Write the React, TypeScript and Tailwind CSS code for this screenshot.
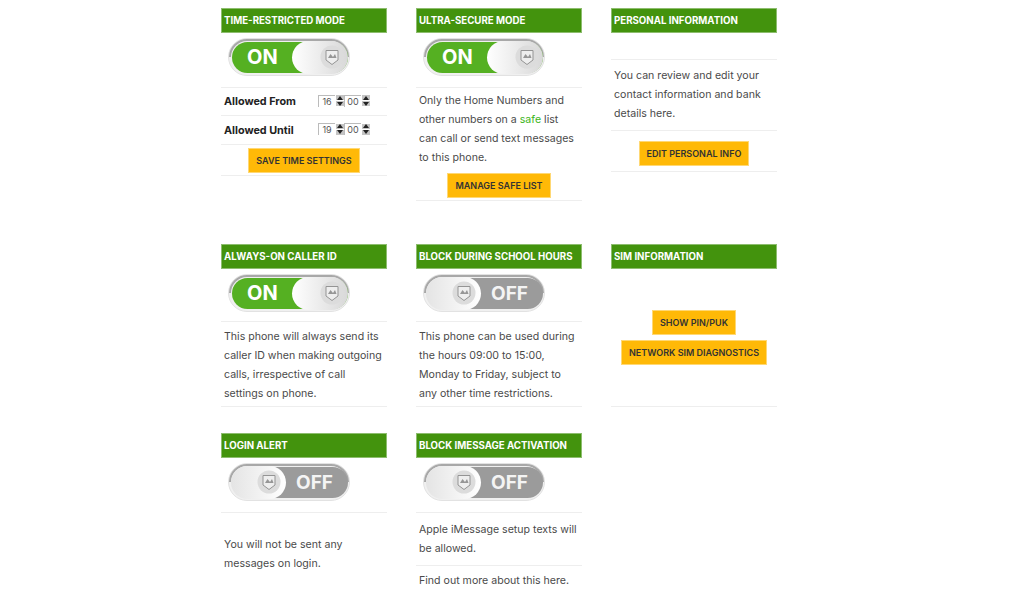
import React from 'react';

const Toggle = ({ on }: { on: boolean }) => (
  <svg width="122" height="38" viewBox="0 0 122 38" className="block">
    <defs>
      <linearGradient id={on ? 'knobOn' : 'knobOff'} x1="0" x2="1" y1="0" y2="0">
        <stop offset="0" stopColor={on ? '#ffffff' : '#e4e4e4'} />
        <stop offset="1" stopColor={on ? '#d8d8d8' : '#ffffff'} />
      </linearGradient>
    </defs>
    <rect x="0.5" y="0.5" width="121" height="37" rx="18.5" fill="#f0f0f0" stroke="#e2e2e2" />
    <path d="M2 19A17 17 0 0 1 19 2H103A17 17 0 0 1 120 19" fill="none" stroke="#a8a8a8" strokeWidth="2" />
    <rect x="4" y="4" width="116" height="31" rx="15.5" fill={on ? '#55b022' : '#9b9b9b'} />
    {on ? (
      <>
        <text x="19" y="26" fontFamily="Inter, sans-serif" fontSize="20" fontWeight="700" fill="#fff">ON</text>
        <rect x="64" y="3" width="56" height="33" rx="16.5" fill="url(#knobOn)" />
      </>
    ) : (
      <>
        <text x="68" y="26" fontFamily="Inter, sans-serif" fontSize="19" fontWeight="700" fill="#f4f4f4">OFF</text>
        <rect x="3" y="3" width="55" height="33" rx="16.5" fill="url(#knobOff)" />
      </>
    )}
    <g transform={on ? 'translate(104 19)' : 'translate(41 19)'}>
      <circle r="11.5" fill="#dcdcdc" />
      <path d="M-6 -6.5L6 -6.5L6 3L0 7.5L-6 3Z" fill="#eeeeee" stroke="#949494" strokeWidth="1" />
      <path d="M-4 1L-1.5 -3L1 0L3 -3L4.5 1Z" fill="#969696" />
    </g>
  </svg>
);

const Header = ({ title }: { title: string }) => (
  <div className="h-[25px] bg-[#43930d] border border-[#8dbd6e] pl-[2px] pt-[1px] flex items-center text-[9.7px] font-bold uppercase whitespace-nowrap text-white">
    {title}
  </div>
);

const Btn = ({ label }: { label: string }) => (
  <div className="h-[25px] px-[7px] bg-[#ffb907] border border-[#ffd874] flex items-center text-[9px] font-semibold uppercase whitespace-nowrap text-[#333]">
    {label}
  </div>
);

const Spinner = ({ value }: { value: string }) => (
  <div className="flex items-center gap-[1px]">
    <div className="w-[17px] h-[12px] text-[9px] leading-[12px] text-center text-[#555] border-l border-t border-[#bbbbbb]">{value}</div>
    <div className="flex flex-col gap-[1px] w-[8px]">
      <div className="h-[5px] bg-[#c4c4c4] flex items-center justify-center">
        <div className="w-0 h-0 border-x-[3px] border-x-transparent border-b-[4px] border-b-[#222]" />
      </div>
      <div className="h-[5px] bg-[#c4c4c4] flex items-center justify-center">
        <div className="w-0 h-0 border-x-[3px] border-x-transparent border-t-[4px] border-t-[#222]" />
      </div>
    </div>
  </div>
);

const TimeRow = ({ label, hour, h }: { label: string; hour: string; h: string }) => (
  <div className={`${h} border-b border-[#eeeeee] pl-[3px] flex items-center justify-between pr-[17px]`}>
    <span className="text-[10.8px] font-bold text-[#222] pt-[2px]">{label}</span>
    <div className="flex items-center mb-[2px]">
      <Spinner value={hour} />
      <Spinner value="00" />
    </div>
  </div>
);

const Text = ({ children }: { children: React.ReactNode }) => (
  <div className="px-[3px] text-[10.6px] leading-[19px] whitespace-nowrap text-[#4a4a4a]">{children}</div>
);

const ToggleRow = ({ on, h }: { on: boolean; h: string }) => (
  <div className={`${h} border-b border-[#eeeeee] pl-[7px] pt-[5px]`}>
    <Toggle on={on} />
  </div>
);

const App = () => {
  return (
    <div className="w-[1024px] h-[590px] overflow-hidden bg-white pl-[221px] pt-2 font-['Inter',sans-serif]">
      <div className="grid grid-cols-[166px_166px_166px] grid-rows-[236px_189px_157px] gap-x-[29px]">
        <div>
          <Header title="Time-restricted mode" />
          <ToggleRow on h="h-[55px]" />
          <TimeRow label="Allowed From" hour="16" h="h-[28px]" />
          <TimeRow label="Allowed Until" hour="19" h="h-[29px]" />
          <div className="h-[31px] border-b border-[#eeeeee] flex items-start pt-[3px] justify-center">
            <Btn label="Save time settings" />
          </div>
        </div>
        <div>
          <Header title="Ultra-secure mode" />
          <ToggleRow on h="h-[55px]" />
          <div className="h-[113px] border-b border-[#eeeeee] pt-[3px] flex flex-col">
            <Text>
              Only the Home Numbers and<br />
              other numbers on a <span className="text-[#3cb521]">safe</span> list<br />
              can call or send text messages<br />
              to this phone.
            </Text>
            <div className="flex justify-center mt-[6px]">
              <Btn label="Manage safe list" />
            </div>
          </div>
        </div>
        <div>
          <Header title="Personal information" />
          <div className="h-[27px] border-b border-[#eeeeee]" />
          <div className="h-[71px] border-b border-[#eeeeee] pt-[6px]">
            <Text>
              You can review and edit your<br />
              contact information and bank<br />
              details here.
            </Text>
          </div>
          <div className="h-[41px] border-b border-[#eeeeee] flex justify-center pt-[10px]">
            <Btn label="Edit personal info" />
          </div>
        </div>

        <div>
          <Header title="Always-on caller ID" />
          <ToggleRow on h="h-[53px]" />
          <div className="h-[85px] border-b border-[#eeeeee] pt-[5px]">
            <Text>
              This phone will always send its<br />
              caller ID when making outgoing<br />
              calls, irrespective of call<br />
              settings on phone.
            </Text>
          </div>
        </div>
        <div>
          <Header title="Block during school hours" />
          <ToggleRow on={false} h="h-[53px]" />
          <div className="h-[85px] border-b border-[#eeeeee] pt-[5px]">
            <Text>
              This phone can be used during<br />
              the hours 09:00 to 15:00,<br />
              Monday to Friday, subject to<br />
              any other time restrictions.
            </Text>
          </div>
        </div>
        <div>
          <Header title="SIM information" />
          <div className="h-[138px] border-b border-[#eeeeee] flex flex-col items-center gap-[5px] pt-[41px]">
            <Btn label="Show PIN/PUK" />
            <Btn label="Network SIM diagnostics" />
          </div>
        </div>

        <div>
          <Header title="Login alert" />
          <ToggleRow on={false} h="h-[55px]" />
          <div className="pt-[22px]">
            <Text>
              You will not be sent any<br />
              messages on login.
            </Text>
          </div>
        </div>
        <div>
          <Header title="Block iMessage activation" />
          <ToggleRow on={false} h="h-[55px]" />
          <div className="h-[53px] border-b border-[#eeeeee] pt-[7px]">
            <Text>
              Apple iMessage setup texts will<br />
              be allowed.
            </Text>
          </div>
          <div className="pt-[5px]">
            <Text>Find out more about this here.</Text>
          </div>
        </div>
      </div>
    </div>
  );
};

export default App;
